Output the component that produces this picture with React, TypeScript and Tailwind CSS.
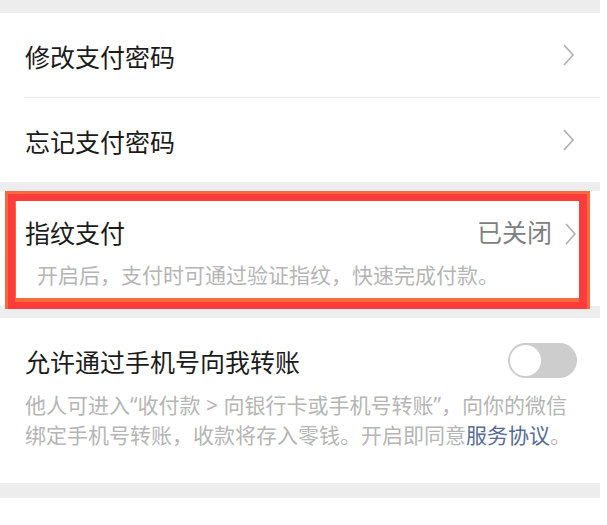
const Chevron = () => (
  <svg width="12" height="22" viewBox="0 0 12 22" fill="none" className="shrink-0">
    <path
      d="M1.5 1.5 L10 11 L1.5 20.5"
      stroke="#b3b3b3"
      strokeWidth="1.8"
      strokeLinecap="round"
      strokeLinejoin="round"
    />
  </svg>
);

const LinkRow = ({ label }: { label: string }) => (
  <div className="flex h-[84px] items-center justify-between pl-[25px] pr-[25px]">
    <span className="pt-[4px] text-[25px] leading-none text-[#1b1b1b]">{label}</span>
    <Chevron />
  </div>
);

const Toggle = () => (
  <div className="flex h-[35px] w-[69px] shrink-0 items-center rounded-full bg-[#cdcdcd] p-[2px]">
    <div className="h-[31px] w-[31px] rounded-full bg-white" />
  </div>
);

export default function App() {
  return (
    <div
      className="flex h-[525px] w-[607px] overflow-hidden bg-white"
      style={{ fontFamily: '"Noto Sans", "Noto Sans CJK SC", sans-serif' }}
    >
      <div className="flex w-[600px] flex-col bg-[#ededed]">
        <div className="h-[13px]" />

        <div className="bg-white">
          <LinkRow label="修改支付密码" />
          <div className="ml-[24px] h-px bg-[#ebebeb]" />
          <LinkRow label="忘记支付密码" />
        </div>

        <div className="h-[9px]" />

        {/* 指纹支付 */}
        <div className="relative h-[115px] bg-white pt-[30px]">
          <div className="flex items-center justify-between pl-[25px] pr-[23px]">
            <span className="text-[25px] leading-none text-[#1b1b1b]">指纹支付</span>
            <div className="flex items-center gap-[13px]">
              <span className="-mt-[3px] text-[25px] leading-none text-[#808080]">已关闭</span>
              <Chevron />
            </div>
          </div>
          <p className="mt-[19px] pl-[37px] text-[21px] leading-none text-[#b5b5b5]">
            开启后，支付时可通过验证指纹，快速完成付款。
          </p>

          {/* red highlight frame */}
          <div className="absolute left-[5px] right-[10px] top-0 bottom-[-3px] border-[3px] border-b-0 border-[#f76a3e]">
            <div className="h-full w-full border-[7px] border-r-[8px] border-[#fd3b3b]">
              <div className="h-full w-full border-b-[4px] border-l-[1px] border-[#f76a3e]" />
            </div>
          </div>
        </div>

        <div className="h-[12px]" />

        {/* 手机号转账 */}
        <div className="h-[165px] bg-white pt-[25px]">
          <div className="flex h-[35px] items-center justify-between pl-[25px] pr-[23px]">
            <span className="pt-[3px] text-[25px] leading-none text-[#1b1b1b]">
              允许通过手机号向我转账
            </span>
            <Toggle />
          </div>
          <p className="mt-[12px] pl-[25px] text-[21px] leading-[30px] text-[#b5b5b5]">
            他人可进入“收付款 &gt; 向银行卡或手机号转账”，向你的微信
            <br />
            绑定手机号转账，收款将存入零钱。开启即同意
            <span className="text-[#576b95]">服务协议</span>。
          </p>
        </div>

        <div className="h-[15px]" />
        <div className="flex-1 bg-white" />
      </div>
    </div>
  );
}
